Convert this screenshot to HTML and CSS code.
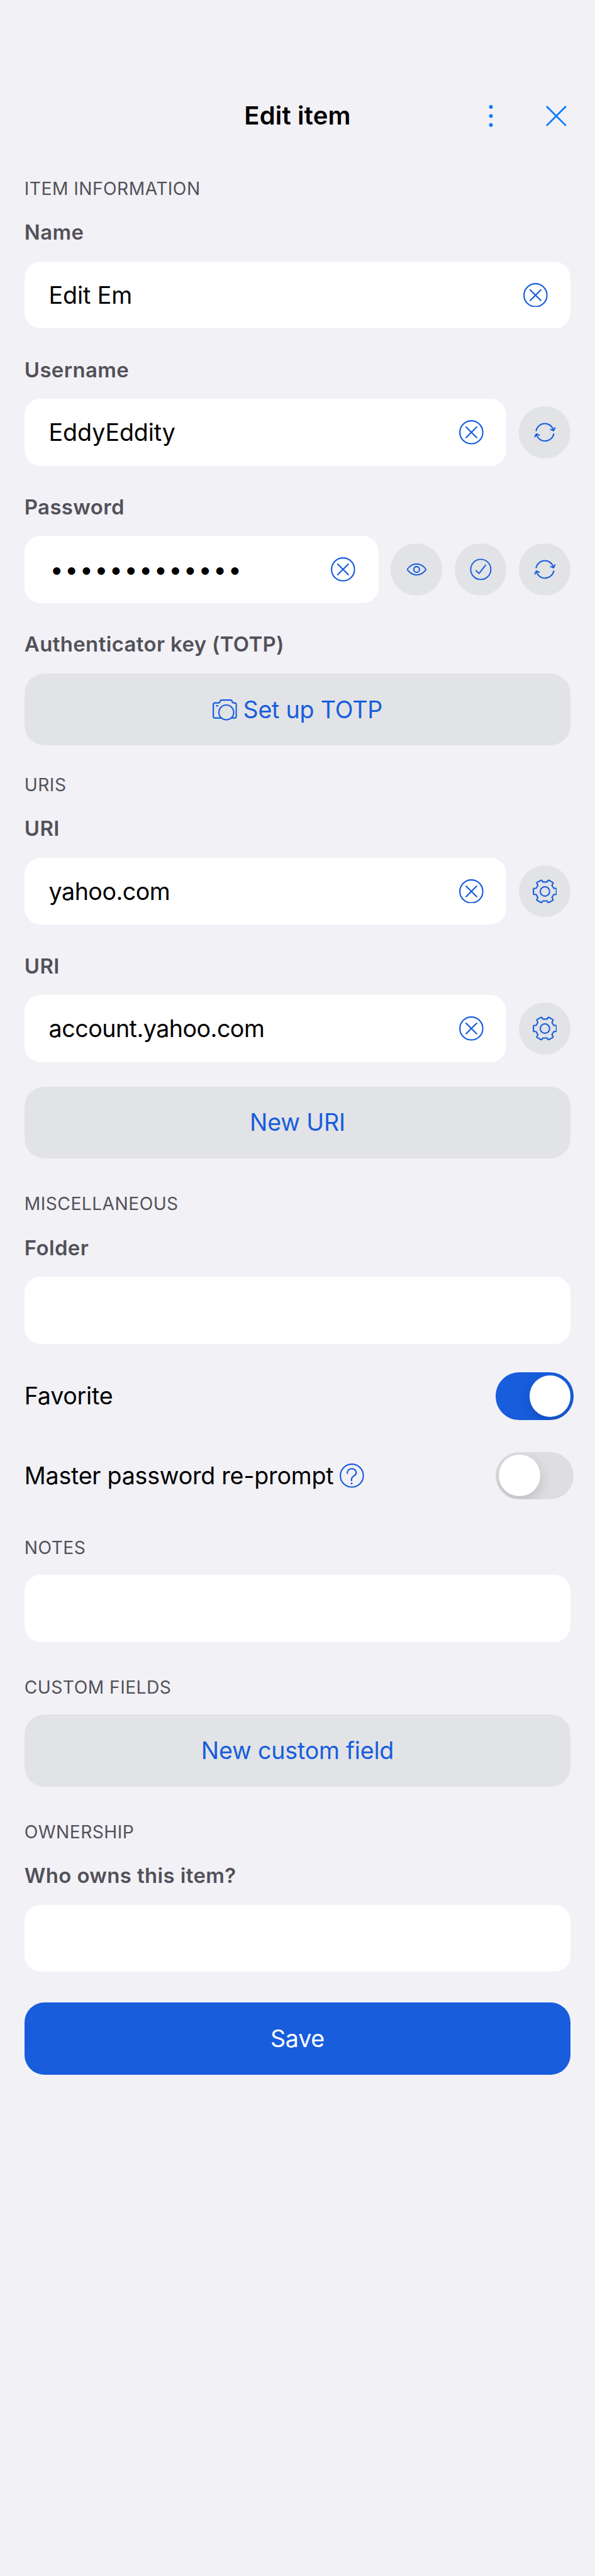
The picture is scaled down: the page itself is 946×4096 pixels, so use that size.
FILE: index.html
```html
<!DOCTYPE html>
<html lang="en">
<head>
<meta charset="utf-8">
<meta name="viewport" content="width=device-width">
<title>Edit item</title>
<link rel="stylesheet" href="styles.css">
</head>
<body>
<svg class="symbols" aria-hidden="true">
  <symbol id="clear" viewBox="-12 -12 24 24"><circle r="11.3" stroke-width="1.35"/><path d="M-5.2-5.2 5.2 5.2M5.2-5.2-5.2 5.2" stroke-width="1.35"/></symbol>
  <symbol id="refresh" viewBox="-12 -12 24 24"><path d="M-8.7-1.6A8.8 8.8 0 0 1 8.5-1.7M5.6-2.8 8.5-1.6 9.9-4.5M8.7 1.6A8.8 8.8 0 0 1-8.5 1.7M-5.6 2.8-8.5 1.6-9.9 4.5" stroke-width="1.25"/></symbol>
  <symbol id="eye" viewBox="-12 -12 24 24"><path d="M-8.8-.7C-6.4-3.7-3.4-5.4 0-5.4S6.4-3.7 8.8-.7Q9.3 0 8.8.7C6.4 3.7 3.4 5.4 0 5.4S-6.4 3.7-8.8.7Q-9.3 0-8.8-.7Z" stroke-width="1.2"/><circle r="2.8" stroke-width="1.25"/></symbol>
  <symbol id="check" viewBox="-12 -12 24 24"><circle r="9.9" stroke-width="1.2"/><path d="M-4.7 1.3-1.7 4 4.7-4.2" stroke-width="1.2"/></symbol>
  <symbol id="gear" viewBox="-12 -12 24 24"><path d="M-2.1-9.3H2.1L2.9-10.7Q3.3-11.2 3.9-10.9L7.7-8.8Q8.2-8.4 7.9-7.8L6.9-6 8.7-3H10.6Q11.3-3 11.3-2.4V2.4Q11.3 3 10.6 3H8.7L6.9 6 7.9 7.8Q8.2 8.4 7.7 8.8L3.9 10.9Q3.3 11.2 2.9 10.7L2.1 9.3H-2.1L-2.9 10.7Q-3.3 11.2-3.9 10.9L-7.7 8.8Q-8.2 8.4-7.9 7.8L-6.9 6-8.7 3H-10.6Q-11.3 3-11.3 2.4V-2.4Q-11.3-3-10.6-3H-8.7L-6.9-6-7.9-7.8Q-8.2-8.4-7.7-8.8L-3.9-10.9Q-3.3-11.2-2.9-10.7Z" stroke-width="1.3"/><circle r="4.6" stroke-width="1.3"/></symbol>
  <symbol id="camera" viewBox="-12 -12 24 24"><path d="M-3.4 8.2H-9.6Q-11.3 8.2-11.3 6.5V-5Q-11.3-6.7-9.6-6.7H-6Q-4.9-6.7-4.7-7.9-4.4-9.5-3-9.5H5.5Q7-9.5 7.3-7.9 7.5-6.7 8.6-6.7H9.6Q11.3-6.7 11.3-5V6.5Q11.3 8.2 9.6 8.2H6.4M-8.3-3.8H-6.8" stroke-width="1.35"/><circle cx="1.5" cy="2.7" r="7.3" stroke-width="1.3"/></symbol>
  <symbol id="help" viewBox="-12 -12 24 24"><circle r="11.3" stroke-width="1.35"/><path d="M-4.5-2.2C-4.5-5.4-2.4-6.9 0-6.9S4.3-5.2 4.3-2.7C4.3.2-.3.4-.3 3.4V4.8" stroke-width="1.35"/><path d="M-.2 7.6V7.61" stroke-width="1.9"/></symbol>
  <symbol id="more" viewBox="-9 -12 18 24"><path d="M0-8.9V-8.89M0 0V.01M0 8.9V8.91" stroke-width="3.6"/></symbol>
  <symbol id="close" viewBox="-12 -12 24 24"><path d="M-9.1-9.1 9.1 9.1M9.1-9.1-9.1 9.1" stroke-width="1.7"/></symbol>
</svg>

<header class="nav">
  <h1 class="nav-title">Edit item</h1>
  <div class="nav-actions">
    <svg class="icon icon-more"><use href="#more"/></svg>
    <svg class="icon"><use href="#close"/></svg>
  </div>
</header>

<main class="form">
  <section class="section">
    <h2 class="section-title">ITEM INFORMATION</h2>
    <div class="group">
      <div class="field">
        <div class="label">Name</div>
        <div class="row"><div class="input"><span>Edit Em</span><svg class="icon"><use href="#clear"/></svg></div></div>
      </div>
      <div class="field">
        <div class="label">Username</div>
        <div class="row">
          <div class="input"><span>EddyEddity</span><svg class="icon"><use href="#clear"/></svg></div>
          <div class="round"><svg class="icon"><use href="#refresh"/></svg></div>
        </div>
      </div>
      <div class="field">
        <div class="label">Password</div>
        <div class="row">
          <div class="input"><span class="dots">•••••••••••••</span><svg class="icon"><use href="#clear"/></svg></div>
          <div class="round"><svg class="icon"><use href="#eye"/></svg></div>
          <div class="round"><svg class="icon"><use href="#check"/></svg></div>
          <div class="round"><svg class="icon"><use href="#refresh"/></svg></div>
        </div>
      </div>
      <div class="field">
        <div class="label">Authenticator key (TOTP)</div>
        <div class="button"><svg class="icon"><use href="#camera"/></svg><span>Set up TOTP</span></div>
      </div>
    </div>
  </section>

  <section class="section section-uris">
    <h2 class="section-title">URIS</h2>
    <div class="group">
      <div class="field">
        <div class="label">URI</div>
        <div class="row">
          <div class="input input-uri"><span>yahoo.com</span><svg class="icon"><use href="#clear"/></svg></div>
          <div class="round"><svg class="icon"><use href="#gear"/></svg></div>
        </div>
      </div>
      <div class="field">
        <div class="label">URI</div>
        <div class="row">
          <div class="input input-uri"><span>account.yahoo.com</span><svg class="icon"><use href="#clear"/></svg></div>
          <div class="round"><svg class="icon"><use href="#gear"/></svg></div>
        </div>
      </div>
    </div>
    <div class="button button-new">New URI</div>
  </section>

  <section class="section">
    <h2 class="section-title">MISCELLANEOUS</h2>
    <div class="group">
      <div class="field">
        <div class="label">Folder</div>
        <div class="row"><div class="input"></div></div>
      </div>
    </div>
    <div class="setting setting-first"><span>Favorite</span><div class="toggle toggle-on"><div class="knob"></div></div></div>
    <div class="setting"><span class="setting-name">Master password re-prompt<svg class="icon"><use href="#help"/></svg></span><div class="toggle"><div class="knob"></div></div></div>
  </section>

  <section class="section section-notes">
    <h2 class="section-title section-title-tight">NOTES</h2>
    <div class="row"><div class="input"></div></div>
  </section>

  <section class="section">
    <h2 class="section-title section-title-tight">CUSTOM FIELDS</h2>
    <div class="button">New custom field</div>
  </section>

  <section class="section">
    <h2 class="section-title">OWNERSHIP</h2>
    <div class="field">
      <div class="label">Who owns this item?</div>
      <div class="row"><div class="input"></div></div>
    </div>
  </section>

  <div class="button button-save">Save</div>
</main>
</body>
</html>
```
FILE: styles.css
```css
/* 1rem is ten points on a 390-point-wide screen */
html {
  font-size: calc(100vw / 39);
}

body {
  margin: 0;
  min-height: 100vh;
  background: #f2f1f6;
  color: #000;
  font-family: Inter, "Liberation Sans", sans-serif;
  overflow-x: hidden;
}

*, *::before, *::after {
  box-sizing: border-box;
}

.symbols {
  display: none;
}

.icon {
  display: block;
  flex: none;
  width: 1.6rem;
  height: 1.6rem;
  fill: none;
  stroke: currentColor;
  stroke-linecap: round;
  stroke-linejoin: round;
  color: #175ddc;
}

.nav {
  display: grid;
  grid-template-columns: 1fr auto 1fr;
  align-items: center;
  height: 2rem;
  margin-top: 6.61rem;
  padding: 0 1.73rem;
}

.nav-title {
  grid-column: 2;
  margin: 0;
  font-size: 1.649rem;
  font-weight: 600;
  letter-spacing: 0.0077rem;
  line-height: 2rem;
}

.nav-actions {
  display: flex;
  justify-content: flex-end;
  gap: 2.9rem;
}

.nav-actions .icon {
  color: #007aff;
}

.icon-more {
  width: 1.2rem;
}

.form {
  padding: 2.96rem 1.6rem 0;
}

.section {
  margin-bottom: 2.18rem;
}

.section-title {
  margin: 0 0 1.07rem;
  color: #525159;
  font-size: 1.164rem;
  font-weight: 400;
  letter-spacing: 0.0185rem;
  line-height: 1.6rem;
}

.section-title-tight {
  margin-bottom: 0.96rem;
}

.group {
  display: flex;
  flex-direction: column;
  gap: 1.7rem;
}

.label {
  margin-bottom: 0.9rem;
  color: #525159;
  font-size: 1.358rem;
  font-weight: 600;
  letter-spacing: 0.0153rem;
  line-height: 2rem;
}

.row {
  display: flex;
  align-items: center;
  gap: 0.8rem;
}

.input {
  display: flex;
  flex: 1;
  align-items: center;
  justify-content: space-between;
  height: 4.4rem;
  padding: 0 1.5rem 0 1.6rem;
  border-radius: 1.05rem;
  background: #fff;
  font-size: 1.552rem;
  letter-spacing: -0.004rem;
}

.input-uri {
  letter-spacing: -0.0215rem;
}

.dots {
  padding: 0.2rem 0 0 0.2rem;
  font-family: "Liberation Sans", sans-serif;
  font-size: 1.8rem;
  letter-spacing: 0.343rem;
}

.round {
  display: flex;
  flex: none;
  align-items: center;
  justify-content: center;
  width: 3.4rem;
  height: 3.4rem;
  border-radius: 50%;
  background: #e2e3e7;
}

.button {
  display: flex;
  align-items: center;
  justify-content: center;
  gap: 0.4rem;
  height: 4.733rem;
  border-radius: 1.3rem;
  background: #e2e3e7;
  color: #175ddc;
  font-size: 1.552rem;
  letter-spacing: -0.009rem;
}

.section-uris {
  margin-top: -0.4rem;
}

.button-new {
  margin-top: 1.6rem;
}

.button-save {
  margin-top: -0.18rem;
  background: #175ddc;
  color: #fff;
}

.setting {
  display: flex;
  align-items: center;
  justify-content: space-between;
  margin: 2.1rem -0.2rem 0 0;
  font-size: 1.552rem;
  letter-spacing: -0.0107rem;
}

.setting-first {
  margin-top: 1.87rem;
}

.setting-name {
  display: flex;
  align-items: center;
  gap: 0.4rem;
}

.toggle {
  width: 5.1rem;
  height: 3.1rem;
  padding: 0.2rem;
  overflow: hidden;
  border-radius: 1.55rem;
  background: #dedde2;
}

.toggle-on {
  background: #175ddc;
}

.knob {
  width: 2.7rem;
  height: 2.7rem;
  border-radius: 50%;
  background: #fff;
  box-shadow: 0 0.3rem 0.8rem rgba(0, 0, 0, 0.15);
}

.toggle-on .knob {
  margin-left: auto;
}

.section-notes {
  margin-top: 2.41rem;
}
```
